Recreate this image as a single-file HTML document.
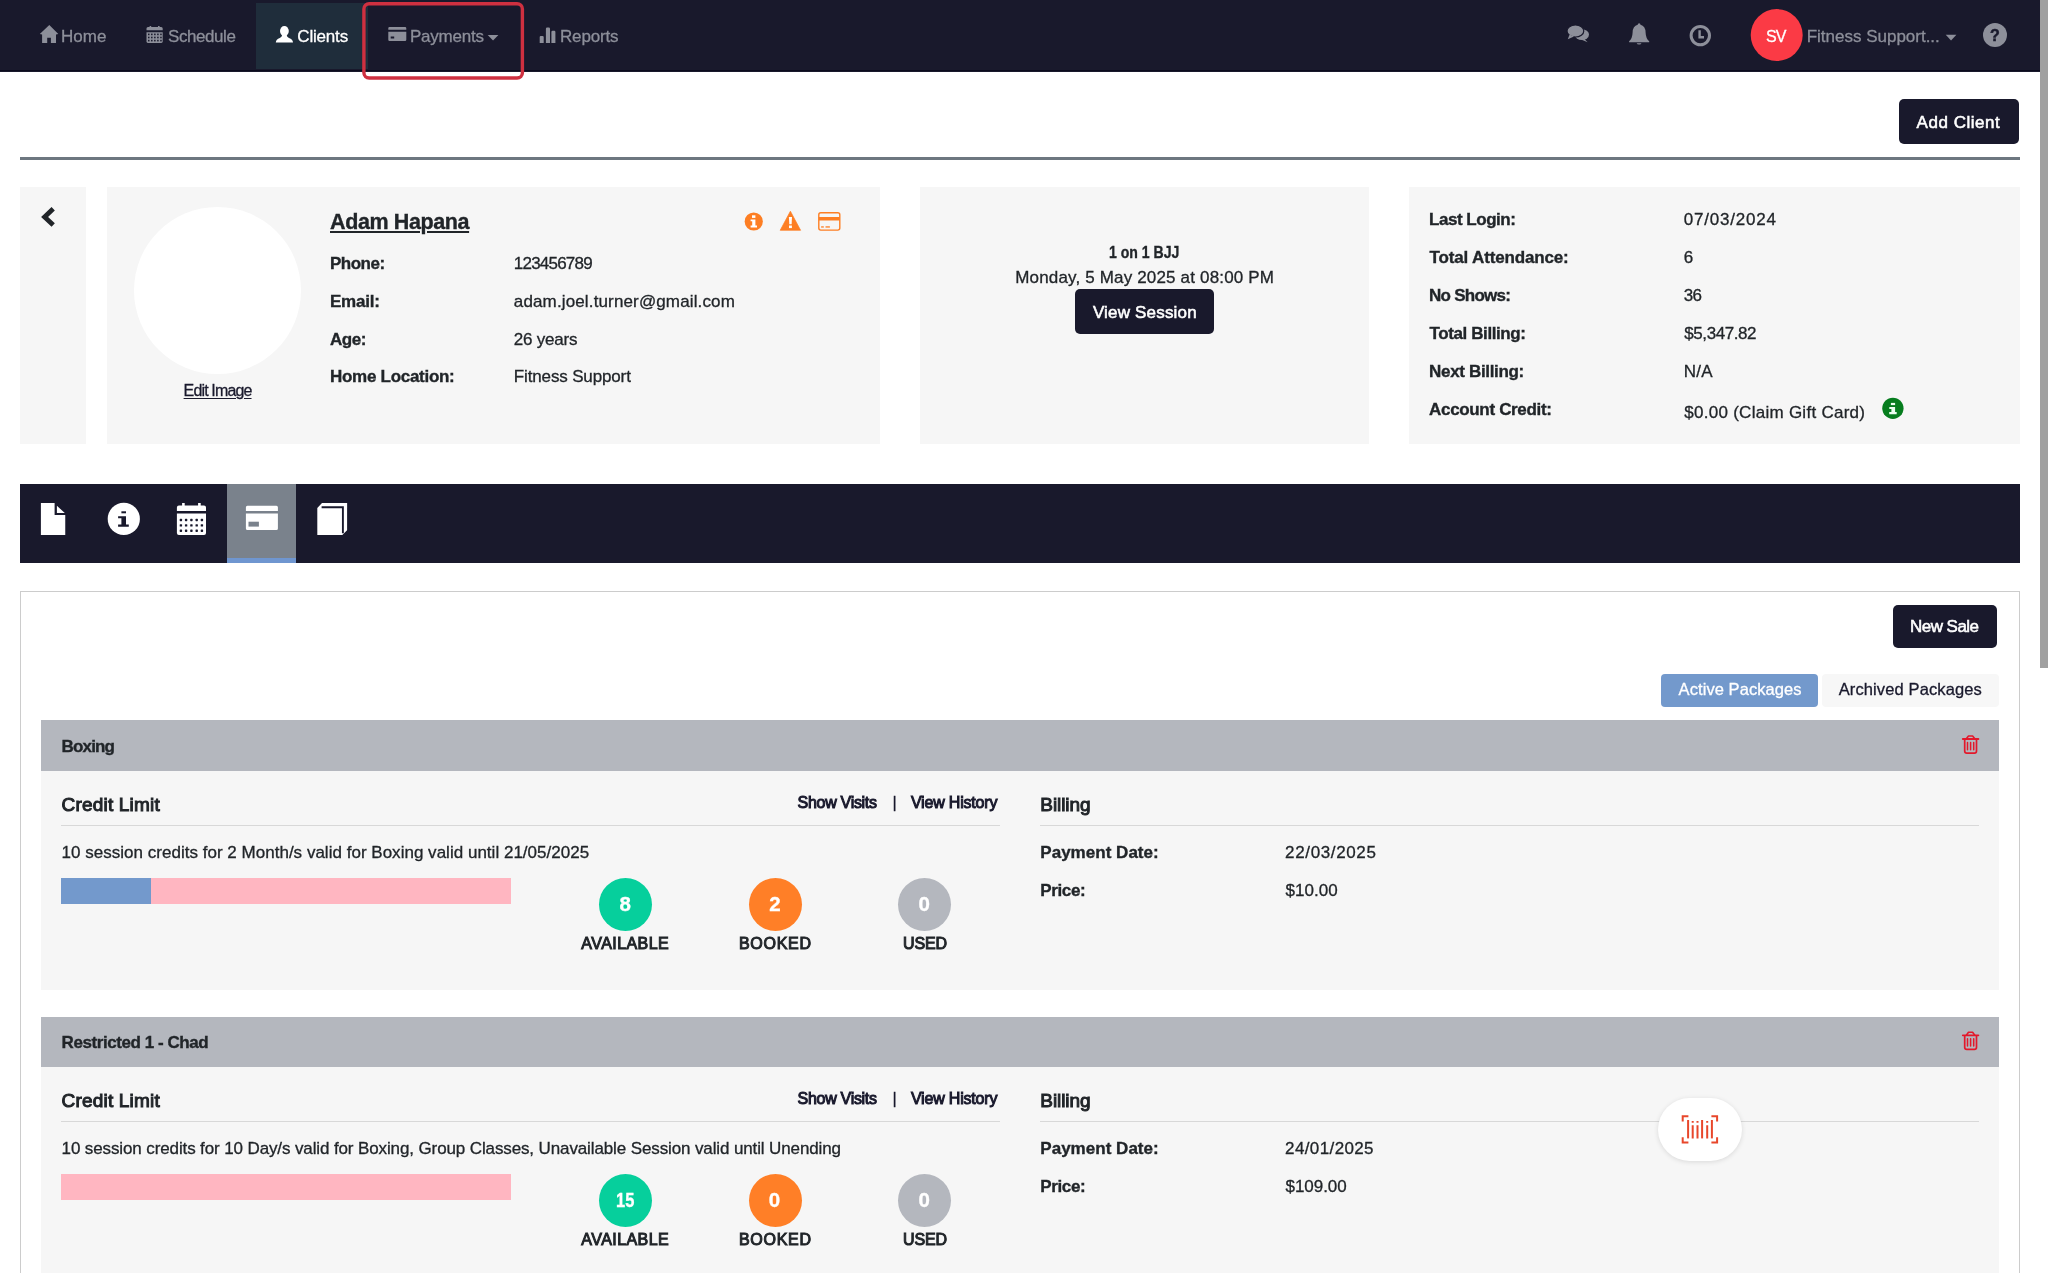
<!DOCTYPE html>
<html lang="en"><head><meta charset="utf-8"><title>Client - Adam Hapana</title>
<style>
html,body{margin:0;padding:0;background:#fff;}
body{width:2048px;height:1273px;position:relative;overflow:hidden;font-family:"Liberation Sans",sans-serif;}
.b,.i,.t{position:absolute;}
.t{white-space:pre;}
</style></head><body>
<div class="b" style="left:0px;top:0px;width:2040px;height:71.5px;background:#19192c;"></div>
<div class="b" style="left:0px;top:70.4px;width:2040px;height:1.1px;background:#0b0b1d;"></div>
<div class="b" style="left:256px;top:3px;width:112px;height:66px;background:#1f2d3b;"></div>
<svg class="i" style="left:355px;top:0" width="180" height="84" viewBox="355 0 180 84"><rect x="363.9" y="3.7" width="158.5" height="74.3" rx="5.3" fill="none" stroke="#cf3040" stroke-width="3.4"/></svg>
<div class="b" style="left:2040px;top:0px;width:8px;height:1273px;background:#fff;"></div>
<div class="b" style="left:2040px;top:0px;width:8px;height:668px;background:#a0a0a0;"></div>
<svg class="i" style="left:0;top:0" width="2048" height="80" viewBox="0 0 2048 80">
<g fill="#8d8f9a">
<path d="M49.3 25 L58.3 33.9 L56 34.6 V43 H50.9 V37.7 H47.2 V43 H42.1 V34.6 L39.8 33.9 Z"/>
<path d="M146.5 28.6 Q146.5 27.1 148 27.1 H161.2 Q162.7 27.1 162.7 28.6 V30.2 H146.5 Z M149.6 26 h1.6 v2.2 h-1.6z M158 26 h1.6 v2.2 h-1.6z"/>
<path d="M146.5 32.2 H162.7 V41.6 Q162.7 43 161.3 43 H147.9 Q146.5 43 146.5 41.6 Z"/>
<path d="M388.3 28.2 Q388.3 27 389.5 27 H405.1 Q406.3 27 406.3 28.2 V29.8 H388.3 Z M388.3 31.7 H406.3 V39.8 Q406.3 41 405.1 41 H389.5 Q388.3 41 388.3 39.8 Z"/>
<path d="M539.7 37.1 Q539.7 35.9 540.9 35.9 H542.5 Q543.7 35.9 543.7 37.1 V43 H539.7 Z M545.9 28.7 Q545.9 27.5 547.1 27.5 H548.8 Q550 27.5 550 28.7 V43 H545.9 Z M551.4 31.9 Q551.4 30.7 552.6 30.7 H554.2 Q555.4 30.7 555.4 31.9 V43 H551.4 Z"/>
<path d="M487.7 35 H498.4 L493.05 40.6 Z"/>
<path d="M1945.7 34.7 H1956.4 L1951.05 40.4 Z"/>
</g>
<g fill="#19192c">
<rect x="148.00" y="33.60" width="1.5" height="1.6"/><rect x="148.00" y="36.70" width="1.5" height="1.6"/><rect x="148.00" y="39.80" width="1.5" height="1.6"/><rect x="151.05" y="33.60" width="1.5" height="1.6"/><rect x="151.05" y="36.70" width="1.5" height="1.6"/><rect x="151.05" y="39.80" width="1.5" height="1.6"/><rect x="154.10" y="33.60" width="1.5" height="1.6"/><rect x="154.10" y="36.70" width="1.5" height="1.6"/><rect x="154.10" y="39.80" width="1.5" height="1.6"/><rect x="157.15" y="33.60" width="1.5" height="1.6"/><rect x="157.15" y="36.70" width="1.5" height="1.6"/><rect x="157.15" y="39.80" width="1.5" height="1.6"/><rect x="160.20" y="33.60" width="1.5" height="1.6"/><rect x="160.20" y="36.70" width="1.5" height="1.6"/><rect x="160.20" y="39.80" width="1.5" height="1.6"/>
<rect x="390.7" y="36.5" width="3.5" height="2"/>
</g>
<g fill="#fff">
<ellipse cx="284.4" cy="31" rx="4.4" ry="5.1"/>
<path d="M275.8 42.6 Q276 39.3 279.8 38 Q282 37.2 282.1 35 H286.7 Q286.8 37.2 289 38 Q292.8 39.3 293 42.6 Z"/>
</g>
<g fill="#8d8f9a">
<ellipse cx="1581.9" cy="34.6" rx="7.1" ry="5.4"/>
<path d="M1584 38.5 L1587.6 42.2 L1581 39.6 Z"/>
</g>
<g fill="#8d8f9a" stroke="#19192c" stroke-width="1.2">
<ellipse cx="1575.4" cy="31" rx="8.4" ry="6"/>
</g>
<path fill="#8d8f9a" d="M1569.6 34.5 L1567.8 39.3 L1574 36.6 Z"/>
<path fill="#8d8f9a" d="M1639.1 23.3 Q1640.4 23.3 1640.5 24.8 Q1645.4 26 1645.6 32.5 Q1645.8 38.6 1649.2 41.2 V42.3 H1629.1 V41.2 Q1632.4 38.6 1632.6 32.5 Q1632.8 26 1637.7 24.8 Q1637.8 23.3 1639.1 23.3 Z M1636.7 43.2 H1641.5 Q1641.2 44.6 1639.1 44.6 Q1637 44.6 1636.7 43.2 Z"/>
<circle cx="1700.3" cy="35.6" r="9.2" fill="none" stroke="#8d8f9a" stroke-width="3"/>
<path d="M1699.6 30.2 V37.3 H1704" fill="none" stroke="#8d8f9a" stroke-width="2.4"/>
<circle cx="1776.7" cy="35.1" r="26" fill="#fb3a45"/>
<circle cx="1995" cy="35" r="12" fill="#8d8f9a"/>
</svg>
<div class="b" style="left:1898.6px;top:99px;width:120.3px;height:45px;background:#19192c;border-radius:5px;"></div>
<div class="b" style="left:20px;top:157.2px;width:2000px;height:2.6px;background:#6d7780;"></div>
<div class="b" style="left:20px;top:186.7px;width:66px;height:257.2px;background:#f6f6f6;"></div>
<div class="b" style="left:106.7px;top:186.7px;width:773.3px;height:257.2px;background:#f6f6f6;"></div>
<div class="b" style="left:920px;top:186.7px;width:448.7px;height:257.2px;background:#f6f6f6;"></div>
<div class="b" style="left:1408.5px;top:186.7px;width:611.7px;height:257.2px;background:#f6f6f6;"></div>
<div class="b" style="left:133.8px;top:206.5px;width:167.6px;height:167.6px;background:#fff;border-radius:50%;"></div>
<div class="b" style="left:1074.6px;top:289.1px;width:139.9px;height:44.7px;background:#19192c;border-radius:5px;"></div>
<svg class="i" style="left:0;top:180px" width="2048" height="280" viewBox="0 180 2048 280">
<path d="M53.2 208.8 L44.6 216.9 L53.2 225" fill="none" stroke="#212529" stroke-width="4.8" stroke-linejoin="miter"/>
<circle cx="753.75" cy="221.5" r="9.1" fill="#fd7e23"/>
<g fill="#fff"><rect x="752" y="215.3" width="3.4" height="2.6"/><path d="M750.6 219.4 H755.4 V225.4 H757 V227.4 H750.6 V225.4 H752.2 V221.3 H750.6 Z"/></g>
<path d="M790.4 211.2 L800.6 230.3 H780.2 Z" fill="#fd7e23" stroke="#fd7e23" stroke-width="0.7" stroke-linejoin="round"/>
<g fill="#fff"><path d="M788.9 217 H792 L791.6 224.3 H789.3 Z"/><rect x="789" y="225.5" width="2.9" height="2.6"/></g>
<rect x="818.8" y="212.8" width="21" height="17.3" rx="2" fill="none" stroke="#fd7e23" stroke-width="1.4"/>
<rect x="818.8" y="217" width="21" height="3.5" fill="#fd7e23"/>
<rect x="821.1" y="226.3" width="2.7" height="1.3" fill="#fd7e23"/><rect x="825.5" y="226.3" width="4.4" height="1.3" fill="#fd7e23"/>
<circle cx="1892.9" cy="408.3" r="10.65" fill="#067d1e"/>
<g fill="#eafff0"><rect x="1890.9" y="402.9" width="4.2" height="2.2"/><path d="M1889.3 407.1 H1895.1 V412 H1896.7 V414.3 H1889.2 V412 H1891.4 V408.9 H1889.3 Z"/></g>
</svg>
<div class="b" style="left:20px;top:484px;width:2000px;height:79px;background:#19192c;"></div>
<div class="b" style="left:227.1px;top:484px;width:68.9px;height:79px;background:#7a828c;"></div>
<div class="b" style="left:227.1px;top:558px;width:68.9px;height:5px;background:#6f96d0;"></div>
<svg class="i" style="left:0;top:484px" width="2048" height="79" viewBox="0 484 2048 79">
<g fill="#fff">
<path d="M40.9 502.9 H54.6 V515 H65.25 V535.1 H40.9 Z M56.9 505.7 L64.8 513.1 H56.9 Z"/>
<circle cx="123.8" cy="518.9" r="16.1"/>
<path d="M176.9 507.4 Q176.9 505.4 178.9 505.4 H204 Q206 505.4 206 507.4 V511 H176.9 Z M182.1 502.9 h2.6 v4 h-2.6z M198.1 502.9 h2.6 v4 h-2.6z"/>
<path d="M176.9 513.4 H206 V533.1 Q206 535.1 204 535.1 H178.9 Q176.9 535.1 176.9 533.1 Z"/>
<path d="M245.9 507.3 Q245.9 505.8 247.4 505.8 H276.4 Q277.9 505.8 277.9 507.3 V510.9 H245.9 Z M245.9 513.4 H277.9 V528.4 Q277.9 529.9 276.4 529.9 H247.4 Q245.9 529.9 245.9 528.4 Z"/>
<path d="M322 502.9 H347.1 V530.2 L342.3 535 H317.3 V508 Z"/>
</g>
<g fill="#19192c">
<rect x="121.4" y="511.3" width="4.6" height="2"/><path d="M118.1 516.3 H126 V524.5 H128.8 V526.7 H118.1 V524.5 H121.4 V518.3 H118.1 Z"/>
<rect x="179.7" y="518.8" width="2.4" height="2.4" rx="0.6"/><rect x="179.7" y="524.2" width="2.4" height="2.4" rx="0.6"/><rect x="179.7" y="529.5" width="2.4" height="2.4" rx="0.6"/><rect x="184.9" y="518.8" width="2.4" height="2.4" rx="0.6"/><rect x="184.9" y="524.2" width="2.4" height="2.4" rx="0.6"/><rect x="184.9" y="529.5" width="2.4" height="2.4" rx="0.6"/><rect x="190.2" y="518.8" width="2.4" height="2.4" rx="0.6"/><rect x="190.2" y="524.2" width="2.4" height="2.4" rx="0.6"/><rect x="190.2" y="529.5" width="2.4" height="2.4" rx="0.6"/><rect x="195.5" y="518.8" width="2.4" height="2.4" rx="0.6"/><rect x="195.5" y="524.2" width="2.4" height="2.4" rx="0.6"/><rect x="195.5" y="529.5" width="2.4" height="2.4" rx="0.6"/><rect x="200.7" y="518.8" width="2.4" height="2.4" rx="0.6"/><rect x="200.7" y="524.2" width="2.4" height="2.4" rx="0.6"/><rect x="200.7" y="529.5" width="2.4" height="2.4" rx="0.6"/>
</g>
<rect x="248.5" y="521.7" width="10.4" height="4.9" fill="#7a828c"/>
<path d="M321.6 507.2 H342.9 V533.2" fill="none" stroke="#19192c" stroke-width="1.9"/>
</svg>
<div class="b" style="left:20px;top:590.5px;width:2000px;height:700px;background:#fff;border:1px solid #ccc;box-sizing:border-box;"></div>
<div class="b" style="left:1892.5px;top:604.6px;width:104.9px;height:43px;background:#19192c;border-radius:5px;"></div>
<div class="b" style="left:1661.1px;top:674.4px;width:156.8px;height:32.4px;background:#7399cc;border-radius:4px;"></div>
<div class="b" style="left:1822px;top:674.4px;width:177px;height:32.4px;background:#f7f7f7;border-radius:4px;"></div>
<div class="b" style="left:41.1px;top:720.3px;width:1957.7px;height:50.5px;background:#b4b7be;"></div>
<div class="b" style="left:41.1px;top:770.8px;width:1957.7px;height:219.3px;background:#f6f6f6;"></div>
<div class="b" style="left:61px;top:825px;width:939px;height:1px;background:#d8d8d8;"></div>
<div class="b" style="left:1040px;top:825px;width:939px;height:1px;background:#d8d8d8;"></div>
<div class="b" style="left:61px;top:877.9px;width:450px;height:26.1px;background:#ffb6c1;"></div>
<div class="b" style="left:598.8px;top:877.6px;width:53px;height:53px;background:#06cf9c;border-radius:50%;"></div>
<div class="b" style="left:749px;top:877.6px;width:53px;height:53px;background:#ff7f27;border-radius:50%;"></div>
<div class="b" style="left:898.4px;top:877.6px;width:53px;height:53px;background:#b4b7be;border-radius:50%;"></div>
<div class="b" style="left:61px;top:877.9px;width:90px;height:26.1px;background:#7399cc;"></div>
<div class="b" style="left:41.1px;top:1016.9px;width:1957.7px;height:50.5px;background:#b4b7be;"></div>
<div class="b" style="left:41.1px;top:1067.4px;width:1957.7px;height:219.3px;background:#f6f6f6;"></div>
<div class="b" style="left:61px;top:1121px;width:939px;height:1px;background:#d8d8d8;"></div>
<div class="b" style="left:1040px;top:1121px;width:939px;height:1px;background:#d8d8d8;"></div>
<div class="b" style="left:61px;top:1173.9px;width:450px;height:26.1px;background:#ffb6c1;"></div>
<div class="b" style="left:598.8px;top:1173.6px;width:53px;height:53px;background:#06cf9c;border-radius:50%;"></div>
<div class="b" style="left:749px;top:1173.6px;width:53px;height:53px;background:#ff7f27;border-radius:50%;"></div>
<div class="b" style="left:898.4px;top:1173.6px;width:53px;height:53px;background:#b4b7be;border-radius:50%;"></div>
<svg class="i" style="left:1950px;top:725px" width="40" height="340" viewBox="1950 725 40 340"><g transform="translate(0.0 0.0)" fill="none" stroke="#e3182b" stroke-linejoin="round" stroke-linecap="round"><path d="M1962.8 739 H1978.4" stroke-width="1.8"/><path d="M1966.5 738.6 L1968.5 736 H1972.6 L1974.6 738.6" stroke-width="1.6"/><path d="M1964.7 739.8 V751 Q1964.7 753.1 1966.8 753.1 H1974.4 Q1976.5 753.1 1976.5 751 V739.8" stroke-width="1.7"/><path d="M1967.5 742.4 V749.8 M1970.6 742.4 V749.8 M1973.7 742.4 V749.8" stroke-width="1.5"/></g><g transform="translate(0.0 296.3)" fill="none" stroke="#e3182b" stroke-linejoin="round" stroke-linecap="round"><path d="M1962.8 739 H1978.4" stroke-width="1.8"/><path d="M1966.5 738.6 L1968.5 736 H1972.6 L1974.6 738.6" stroke-width="1.6"/><path d="M1964.7 739.8 V751 Q1964.7 753.1 1966.8 753.1 H1974.4 Q1976.5 753.1 1976.5 751 V739.8" stroke-width="1.7"/><path d="M1967.5 742.4 V749.8 M1970.6 742.4 V749.8 M1973.7 742.4 V749.8" stroke-width="1.5"/></g></svg>
<div class="b" style="left:1657.7px;top:1097.8px;width:84.4px;height:63.7px;background:#fff;border-radius:32px;box-shadow:0 1px 5px rgba(0,0,0,0.12);"></div>
<svg class="i" style="left:1670px;top:1105px" width="60" height="50" viewBox="1670 1105 60 50"><g fill="none" stroke="#e8472b" stroke-width="2">
<path d="M1682.7 1121.5 V1116.2 H1688.4 M1711.4 1116.2 H1717.1 V1121.5 M1717.1 1137.3 V1142.6 H1711.4 M1688.4 1142.6 H1682.7 V1137.3"/>
<path d="M1688.1 1120 V1138.4"/><path d="M1692.7 1125.2 V1138.4 M1692.7 1121 V1122.8"/><path d="M1697.5 1125.2 V1138.4 M1697.5 1121 V1122.8"/><path d="M1702.1 1120 V1138.4"/><path d="M1707.2 1125.2 V1138.4 M1707.2 1121 V1122.8"/><path d="M1711.9 1120 V1138.4"/></g></svg>
<div id="txt" style="position:absolute;left:0;top:0;width:2048px;height:1273px;will-change:transform;">
<span class="t" style="left:61.1px;top:28px;font-size:17px;line-height:17px;-webkit-text-stroke:0.3px currentColor;color:#8d8f9a;letter-spacing:-0.033px;">Home</span>
<span class="t" style="left:168.0px;top:28px;font-size:17px;line-height:17px;-webkit-text-stroke:0.3px currentColor;color:#8d8f9a;letter-spacing:-0.429px;">Schedule</span>
<span class="t" style="left:297.3px;top:28px;font-size:17px;line-height:17px;-webkit-text-stroke:0.3px currentColor;color:#fff;letter-spacing:-0.183px;">Clients</span>
<span class="t" style="left:410.0px;top:28px;font-size:17px;line-height:17px;-webkit-text-stroke:0.3px currentColor;color:#8d8f9a;letter-spacing:-0.229px;">Payments</span>
<span class="t" style="left:560.0px;top:28px;font-size:17px;line-height:17px;-webkit-text-stroke:0.3px currentColor;color:#8d8f9a;letter-spacing:-0.167px;">Reports</span>
<span class="t" style="left:1766.0px;top:29px;font-size:16px;line-height:16px;-webkit-text-stroke:0.3px currentColor;color:#fff;letter-spacing:-1.0px;">SV</span>
<span class="t" style="left:1806.7px;top:28px;font-size:17px;line-height:17px;-webkit-text-stroke:0.3px currentColor;color:#8d8f9a;letter-spacing:-0.006px;">Fitness Support...</span>
<span class="t" style="left:1916.5px;top:114px;font-size:17px;line-height:17px;-webkit-text-stroke:0.55px currentColor;color:#fff;letter-spacing:0.544px;">Add Client</span>
<span class="t" style="left:330.0px;top:212px;font-size:21.5px;line-height:21.5px;font-weight:700;-webkit-text-stroke:0.35px currentColor;color:#212529;letter-spacing:-0.39px;text-decoration:underline;text-underline-offset:2px;">Adam Hapana</span>
<span class="t" style="left:330.0px;top:255px;font-size:17px;line-height:17px;font-weight:700;-webkit-text-stroke:0.35px currentColor;color:#212529;letter-spacing:-0.5px;">Phone:</span>
<span class="t" style="left:330.0px;top:293px;font-size:17px;line-height:17px;font-weight:700;-webkit-text-stroke:0.35px currentColor;color:#212529;letter-spacing:-0.24px;">Email:</span>
<span class="t" style="left:330.0px;top:331px;font-size:17px;line-height:17px;font-weight:700;-webkit-text-stroke:0.35px currentColor;color:#212529;letter-spacing:-0.467px;">Age:</span>
<span class="t" style="left:330.0px;top:368px;font-size:17px;line-height:17px;font-weight:700;-webkit-text-stroke:0.35px currentColor;color:#212529;letter-spacing:-0.285px;">Home Location:</span>
<span class="t" style="left:513.8px;top:255px;font-size:17px;line-height:17px;-webkit-text-stroke:0.3px currentColor;color:#212529;letter-spacing:-0.775px;">123456789</span>
<span class="t" style="left:513.8px;top:293px;font-size:17px;line-height:17px;-webkit-text-stroke:0.3px currentColor;color:#212529;letter-spacing:0.14px;">adam.joel.turner@gmail.com</span>
<span class="t" style="left:513.8px;top:331px;font-size:17px;line-height:17px;-webkit-text-stroke:0.3px currentColor;color:#212529;letter-spacing:-0.229px;">26 years</span>
<span class="t" style="left:513.8px;top:368px;font-size:17px;line-height:17px;-webkit-text-stroke:0.3px currentColor;color:#212529;letter-spacing:-0.143px;">Fitness Support</span>
<span class="t" style="left:183.6px;top:383px;font-size:16px;line-height:16px;-webkit-text-stroke:0.3px currentColor;color:#19192c;letter-spacing:-0.856px;text-decoration:underline;text-underline-offset:2px;">Edit Image</span>
<span class="t" style="left:1109.2px;top:244px;font-size:17px;line-height:17px;font-weight:700;-webkit-text-stroke:0.35px currentColor;color:#212529;transform:scaleX(0.827);transform-origin:0 0;">1 on 1 BJJ</span>
<span class="t" style="left:1015.2px;top:269px;font-size:17px;line-height:17px;-webkit-text-stroke:0.3px currentColor;color:#212529;letter-spacing:0.169px;">Monday, 5 May 2025 at 08:00 PM</span>
<span class="t" style="left:1092.9px;top:304px;font-size:17px;line-height:17px;-webkit-text-stroke:0.55px currentColor;color:#fff;letter-spacing:0.182px;">View Session</span>
<span class="t" style="left:1429.1px;top:211px;font-size:17px;line-height:17px;font-weight:700;-webkit-text-stroke:0.35px currentColor;color:#212529;letter-spacing:-0.48px;">Last Login:</span>
<span class="t" style="left:1429.6px;top:249px;font-size:17px;line-height:17px;font-weight:700;-webkit-text-stroke:0.35px currentColor;color:#212529;letter-spacing:-0.156px;">Total Attendance:</span>
<span class="t" style="left:1429.1px;top:287px;font-size:17px;line-height:17px;font-weight:700;-webkit-text-stroke:0.35px currentColor;color:#212529;letter-spacing:-0.75px;">No Shows:</span>
<span class="t" style="left:1429.6px;top:325px;font-size:17px;line-height:17px;font-weight:700;-webkit-text-stroke:0.35px currentColor;color:#212529;letter-spacing:-0.408px;">Total Billing:</span>
<span class="t" style="left:1429.1px;top:363px;font-size:17px;line-height:17px;font-weight:700;-webkit-text-stroke:0.35px currentColor;color:#212529;letter-spacing:-0.342px;">Next Billing:</span>
<span class="t" style="left:1429.1px;top:401px;font-size:17px;line-height:17px;font-weight:700;-webkit-text-stroke:0.35px currentColor;color:#212529;letter-spacing:-0.336px;">Account Credit:</span>
<span class="t" style="left:1683.8px;top:211px;font-size:17px;line-height:17px;-webkit-text-stroke:0.3px currentColor;color:#212529;letter-spacing:0.789px;">07/03/2024</span>
<span class="t" style="left:1683.8px;top:249px;font-size:17px;line-height:17px;-webkit-text-stroke:0.3px currentColor;color:#212529;">6</span>
<span class="t" style="left:1683.8px;top:287px;font-size:17px;line-height:17px;-webkit-text-stroke:0.3px currentColor;color:#212529;letter-spacing:-0.8px;">36</span>
<span class="t" style="left:1684.3px;top:325px;font-size:17px;line-height:17px;-webkit-text-stroke:0.3px currentColor;color:#212529;letter-spacing:-0.425px;">$5,347.82</span>
<span class="t" style="left:1683.8px;top:363px;font-size:17px;line-height:17px;-webkit-text-stroke:0.3px currentColor;color:#212529;letter-spacing:0.25px;">N/A</span>
<span class="t" style="left:1684.3px;top:404px;font-size:17px;line-height:17px;-webkit-text-stroke:0.3px currentColor;color:#212529;letter-spacing:0.268px;">$0.00 (Claim Gift Card)</span>
<span class="t" style="left:1910.1px;top:618px;font-size:17px;line-height:17px;-webkit-text-stroke:0.55px currentColor;color:#fff;letter-spacing:-0.557px;">New Sale</span>
<span class="t" style="left:1678.6px;top:681px;font-size:16.5px;line-height:16.5px;-webkit-text-stroke:0.3px currentColor;color:#fff;letter-spacing:0.071px;">Active Packages</span>
<span class="t" style="left:1838.7px;top:681px;font-size:16.5px;line-height:16.5px;-webkit-text-stroke:0.3px currentColor;color:#19192c;letter-spacing:0.119px;">Archived Packages</span>
<span class="t" style="left:61.6px;top:738px;font-size:17px;line-height:17px;font-weight:700;-webkit-text-stroke:0.35px currentColor;color:#212529;letter-spacing:-0.84px;">Boxing</span>
<span class="t" style="left:61.6px;top:795px;font-size:19px;line-height:19px;-webkit-text-stroke:1px currentColor;color:#212529;letter-spacing:0.182px;">Credit Limit</span>
<span class="t" style="left:797.6px;top:795px;font-size:16px;line-height:16px;-webkit-text-stroke:1px currentColor;color:#19192c;letter-spacing:-0.3px;">Show Visits</span>
<span class="t" style="left:892.6px;top:795px;font-size:16px;line-height:16px;-webkit-text-stroke:0.3px currentColor;color:#19192c;">|</span>
<span class="t" style="left:910.9px;top:795px;font-size:16px;line-height:16px;-webkit-text-stroke:1px currentColor;color:#19192c;letter-spacing:-0.191px;">View History</span>
<span class="t" style="left:61.6px;top:844px;font-size:17px;line-height:17px;-webkit-text-stroke:0.3px currentColor;color:#212529;letter-spacing:0.017px;">10 session credits for 2 Month/s valid for Boxing valid until 21/05/2025</span>
<span class="t" style="left:619.4px;top:894px;font-size:20.5px;line-height:20.5px;font-weight:700;-webkit-text-stroke:0.35px currentColor;color:#fff;">8</span>
<span class="t" style="left:769.3px;top:894px;font-size:20.5px;line-height:20.5px;font-weight:700;-webkit-text-stroke:0.35px currentColor;color:#fff;">2</span>
<span class="t" style="left:918.4px;top:894px;font-size:20.5px;line-height:20.5px;font-weight:700;-webkit-text-stroke:0.35px currentColor;color:#fff;">0</span>
<span class="t" style="left:581.3px;top:936px;font-size:16px;line-height:16px;-webkit-text-stroke:1px currentColor;color:#212529;letter-spacing:0.438px;">AVAILABLE</span>
<span class="t" style="left:739.0px;top:936px;font-size:16px;line-height:16px;-webkit-text-stroke:1px currentColor;color:#212529;letter-spacing:0.7px;">BOOKED</span>
<span class="t" style="left:903.0px;top:936px;font-size:16px;line-height:16px;-webkit-text-stroke:1px currentColor;color:#212529;letter-spacing:-0.133px;">USED</span>
<span class="t" style="left:1040.3px;top:795px;font-size:19px;line-height:19px;-webkit-text-stroke:1px currentColor;color:#212529;letter-spacing:-0.083px;">Billing</span>
<span class="t" style="left:1040.3px;top:844px;font-size:17px;line-height:17px;font-weight:700;-webkit-text-stroke:0.35px currentColor;color:#212529;letter-spacing:0.025px;">Payment Date:</span>
<span class="t" style="left:1285.1px;top:844px;font-size:17px;line-height:17px;-webkit-text-stroke:0.3px currentColor;color:#212529;letter-spacing:0.633px;">22/03/2025</span>
<span class="t" style="left:1040.3px;top:882px;font-size:17px;line-height:17px;font-weight:700;-webkit-text-stroke:0.35px currentColor;color:#212529;letter-spacing:-0.38px;">Price:</span>
<span class="t" style="left:1285.6px;top:882px;font-size:17px;line-height:17px;-webkit-text-stroke:0.3px currentColor;color:#212529;">$10.00</span>
<span class="t" style="left:61.6px;top:1034px;font-size:17px;line-height:17px;font-weight:700;-webkit-text-stroke:0.35px currentColor;color:#212529;letter-spacing:-0.433px;">Restricted 1 - Chad</span>
<span class="t" style="left:61.6px;top:1091px;font-size:19px;line-height:19px;-webkit-text-stroke:1px currentColor;color:#212529;letter-spacing:0.182px;">Credit Limit</span>
<span class="t" style="left:797.6px;top:1091px;font-size:16px;line-height:16px;-webkit-text-stroke:1px currentColor;color:#19192c;letter-spacing:-0.3px;">Show Visits</span>
<span class="t" style="left:892.6px;top:1091px;font-size:16px;line-height:16px;-webkit-text-stroke:0.3px currentColor;color:#19192c;">|</span>
<span class="t" style="left:910.9px;top:1091px;font-size:16px;line-height:16px;-webkit-text-stroke:1px currentColor;color:#19192c;letter-spacing:-0.191px;">View History</span>
<span class="t" style="left:61.6px;top:1140px;font-size:17px;line-height:17px;-webkit-text-stroke:0.3px currentColor;color:#212529;letter-spacing:-0.119px;">10 session credits for 10 Day/s valid for Boxing, Group Classes, Unavailable Session valid until Unending</span>
<span class="t" style="left:616.0px;top:1190px;font-size:20.5px;line-height:20.5px;font-weight:700;-webkit-text-stroke:0.35px currentColor;color:#fff;transform:scaleX(0.804);transform-origin:0 0;">15</span>
<span class="t" style="left:768.7px;top:1190px;font-size:20.5px;line-height:20.5px;font-weight:700;-webkit-text-stroke:0.35px currentColor;color:#fff;">0</span>
<span class="t" style="left:918.4px;top:1190px;font-size:20.5px;line-height:20.5px;font-weight:700;-webkit-text-stroke:0.35px currentColor;color:#fff;">0</span>
<span class="t" style="left:581.3px;top:1232px;font-size:16px;line-height:16px;-webkit-text-stroke:1px currentColor;color:#212529;letter-spacing:0.438px;">AVAILABLE</span>
<span class="t" style="left:739.0px;top:1232px;font-size:16px;line-height:16px;-webkit-text-stroke:1px currentColor;color:#212529;letter-spacing:0.7px;">BOOKED</span>
<span class="t" style="left:903.0px;top:1232px;font-size:16px;line-height:16px;-webkit-text-stroke:1px currentColor;color:#212529;letter-spacing:-0.133px;">USED</span>
<span class="t" style="left:1040.3px;top:1091px;font-size:19px;line-height:19px;-webkit-text-stroke:1px currentColor;color:#212529;letter-spacing:-0.083px;">Billing</span>
<span class="t" style="left:1040.3px;top:1140px;font-size:17px;line-height:17px;font-weight:700;-webkit-text-stroke:0.35px currentColor;color:#212529;letter-spacing:0.025px;">Payment Date:</span>
<span class="t" style="left:1285.1px;top:1140px;font-size:17px;line-height:17px;-webkit-text-stroke:0.3px currentColor;color:#212529;letter-spacing:0.378px;">24/01/2025</span>
<span class="t" style="left:1040.3px;top:1178px;font-size:17px;line-height:17px;font-weight:700;-webkit-text-stroke:0.35px currentColor;color:#212529;letter-spacing:-0.38px;">Price:</span>
<span class="t" style="left:1285.6px;top:1178px;font-size:17px;line-height:17px;-webkit-text-stroke:0.3px currentColor;color:#212529;letter-spacing:-0.067px;">$109.00</span>
<span class="t" style="left:1990.1px;top:28px;font-size:16px;line-height:16px;font-weight:700;-webkit-text-stroke:0.5px #19192c;color:#19192c">?</span>
</div>
</body></html>
